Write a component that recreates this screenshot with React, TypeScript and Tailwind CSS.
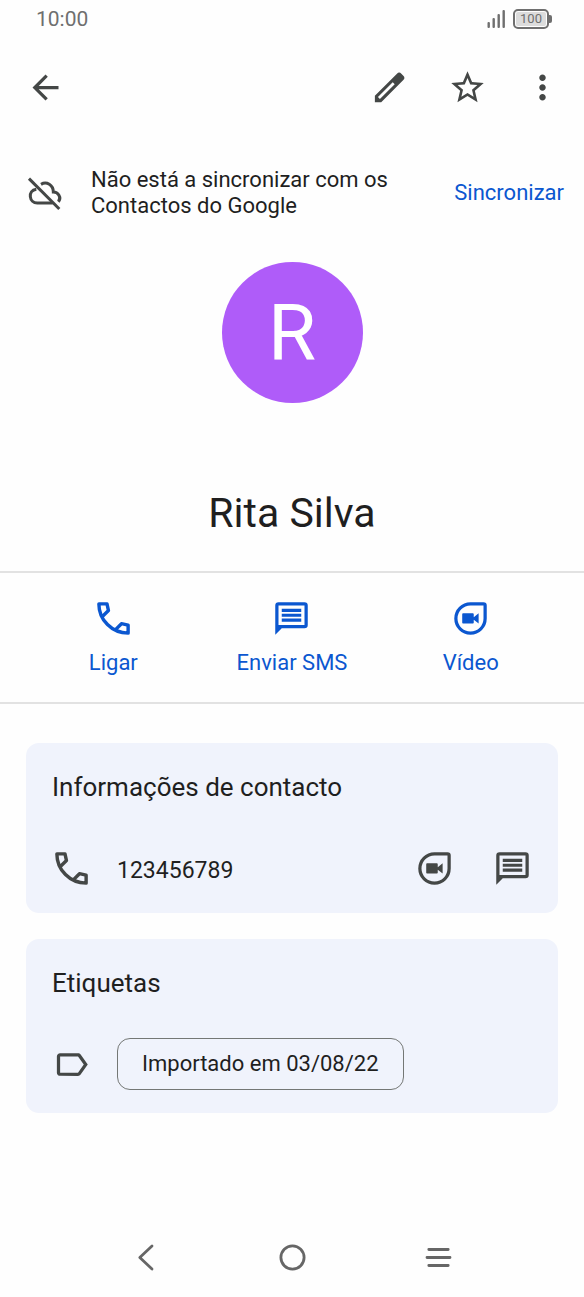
import type { ReactNode } from "react";
import {
  MdArrowBack,
  MdMoreVert,
  MdOutlineLabel,
  MdStarOutline,
} from "react-icons/md";

const ICON = "block h-[39px] w-[39px] shrink-0";

function PencilIcon() {
  return (
    <svg viewBox="0 0 24 24" className={ICON} aria-hidden="true">
      <path
        fill="currentColor"
        fillRule="evenodd"
        d="M20.5 4.7 19.3 3.5a1.9 1.9 0 0 0-2.7 0L3 17.1V21h3.9L20.5 7.4a1.9 1.9 0 0 0 0-2.7ZM6.1 19.1 4.9 17.9 14 8.8l1.2 1.2Z"
      />
    </svg>
  );
}

function CloudOffIcon() {
  return (
    <svg
      viewBox="0 0 117 117"
      className={ICON}
      fill="none"
      stroke="currentColor"
      strokeWidth="9"
      aria-hidden="true"
    >
      <path d="M9 14 100 105" />
      <path d="M45 31C62 21 82 33 82 54C96 54 108 70 97 83" />
      <path d="M31 46C17 48 12 58 13 68C14 79 22 87 34 87H80" />
    </svg>
  );
}

function PhoneIcon() {
  return (
    <svg viewBox="0 0 24 24" className={ICON} aria-hidden="true">
      <path
        fill="none"
        stroke="currentColor"
        strokeWidth="2.1"
        strokeLinejoin="round"
        d="M5 10.9 8.9 7.1 8 3H3C3 12.9 11.1 21 21 21V16.1L16.9 15.2 13.1 19"
      />
    </svg>
  );
}

function ChatIcon() {
  return (
    <svg viewBox="0 0 24 24" className={ICON} aria-hidden="true">
      <path
        fill="currentColor"
        fillRule="evenodd"
        d="M4 2h16a2 2 0 0 1 2 2v12a2 2 0 0 1-2 2H6l-4 4V4a2 2 0 0 1 2-2Zm0 2v12h16V4Z"
      />
      <path stroke="currentColor" strokeWidth="1.9" d="M6 7H18M6 10H18M6 13H18" />
    </svg>
  );
}

function VideoIcon() {
  return (
    <svg viewBox="0 0 24 24" className={ICON} aria-hidden="true">
      <path
        fill="none"
        stroke="currentColor"
        strokeWidth="2"
        d="M12 3h8a1 1 0 0 1 1 1v8a9 9 0 1 1-9-9Z"
      />
      <path
        fill="currentColor"
        d="M7.5 8.8h5.8c.4 0 .7.3.7.7v1.7l3-2.4v6.3l-3-2.4v1.7c0 .4-.3.7-.7.7H7.5a.6.6 0 0 1-.6-.7V9.5c0-.4.3-.7.6-.7Z"
      />
    </svg>
  );
}

function StatusBar() {
  return (
    <div className="flex h-[38px] items-center justify-between pr-8 pl-9 text-[#6f6f6f]">
      <span className="text-[21px] leading-6">10:00</span>
      <div className="flex items-center gap-2">
        <svg viewBox="0 0 18 18" className="h-[18px] w-[18px]" fill="currentColor" aria-hidden="true">
          <rect x="0.5" y="12" width="2.4" height="6" rx="1" />
          <rect x="5.5" y="8" width="2.4" height="10" rx="1" />
          <rect x="10.5" y="4" width="2.4" height="14" rx="1" />
          <rect x="15.5" y="0" width="2.4" height="18" rx="1" />
        </svg>
        <div className="flex items-center">
          <div className="flex h-5 w-9 rounded-[5px] border-2 border-current p-px">
            <span className="flex-1 rounded-xs bg-[#dcdcdc] text-center text-[13px] leading-[14px]">100</span>
          </div>
          <div className="h-2 w-[3px] rounded-r-xs bg-[#6f6f6f]" />
        </div>
      </div>
    </div>
  );
}

function IconButton({ label, children }: { label: string; children: ReactNode }) {
  return (
    <button type="button" aria-label={label} className="text-[#444746]">
      {children}
    </button>
  );
}

function Action({ label, children }: { label: string; children: ReactNode }) {
  return (
    <button type="button" className="flex flex-col items-center gap-3 text-[#0b57d0]">
      {children}
      <span className="text-[22px] leading-[26px]">{label}</span>
    </button>
  );
}

function Card({ title, children }: { title: string; children: ReactNode }) {
  return (
    <section className="rounded-[13px] bg-[#f0f3fc] px-[26px] pt-7">
      <h2 className="text-[26px] leading-8 text-[#1f1f1f]">{title}</h2>
      {children}
    </section>
  );
}

export default function App() {
  return (
    <div className="min-h-screen bg-[#fefefe] font-['Roboto',sans-serif] text-[#1f1f1f]">
      <StatusBar />

      <header className="flex h-[99px] items-center justify-between pr-[22px] pl-[26px]">
        <IconButton label="Voltar">
          <MdArrowBack className={ICON} />
        </IconButton>
        <div className="flex gap-[39px]">
          <IconButton label="Editar">
            <PencilIcon />
          </IconButton>
          <div className="flex gap-9">
            <IconButton label="Favorito">
              <MdStarOutline className={ICON} />
            </IconButton>
            <IconButton label="Mais opções">
              <MdMoreVert className={ICON} />
            </IconButton>
          </div>
        </div>
      </header>

      <main>
        <div className="flex h-[112px] items-center pr-5 pl-[26px]">
          <span className="text-[#444746]">
            <CloudOffIcon />
          </span>
          <p className="ml-[26px] w-[310px] text-[22px] leading-[26px]">
            Não está a sincronizar com os Contactos do Google
          </p>
          <button type="button" className="ml-auto text-[22px] leading-[26px] text-[#0b57d0]">
            Sincronizar
          </button>
        </div>

        <div className="flex flex-col items-center pt-[13px] pb-[34px]">
          <div className="flex h-[141px] w-[141px] items-center justify-center rounded-full bg-[#af5cf9] text-[78px] leading-none text-white">
            R
          </div>
          <h1 className="mt-[86px] text-[41px] leading-[48px]">Rita Silva</h1>
        </div>

        <div className="grid grid-cols-3 border-y-2 border-[#e2e2e2] px-6 py-[26px]">
          <Action label="Ligar">
            <PhoneIcon />
          </Action>
          <Action label="Enviar SMS">
            <ChatIcon />
          </Action>
          <Action label="Vídeo">
            <VideoIcon />
          </Action>
        </div>

        <div className="flex flex-col gap-[26px] px-[26px] pt-[39px]">
          <Card title="Informações de contacto">
            <div className="mt-[46px] flex items-center pb-[25px] text-[#444746]">
              <PhoneIcon />
              <span className="ml-[26px] pt-1 text-[23px] leading-7 text-[#1f1f1f]">123456789</span>
              <div className="ml-auto flex gap-[39px]">
                <IconButton label="Videochamada">
                  <VideoIcon />
                </IconButton>
                <IconButton label="Mensagem">
                  <ChatIcon />
                </IconButton>
              </div>
            </div>
          </Card>
          <Card title="Etiquetas">
            <div className="mt-[39px] flex items-center pb-[23px] text-[#444746]">
              <MdOutlineLabel className={ICON} />
              <button
                type="button"
                className="ml-[26px] h-[52px] rounded-[13px] border border-[#747775] px-6 text-[22px] leading-[26px] text-[#1f1f1f]"
              >
                Importado em 03/08/22
              </button>
            </div>
          </Card>
        </div>
      </main>

      <nav className="mt-[125px] grid grid-cols-3 px-[12.5%] pb-[19px] text-[#666666]">
        <button type="button" aria-label="Retroceder" className="flex justify-center">
          <svg viewBox="0 0 39 39" className={ICON} fill="none" stroke="currentColor" strokeWidth="2.8" strokeLinecap="round" strokeLinejoin="round" aria-hidden="true">
            <path d="M25 8 12.8 19.5 25 31" />
          </svg>
        </button>
        <button type="button" aria-label="Início" className="flex justify-center">
          <svg viewBox="0 0 39 39" className={ICON} fill="none" stroke="currentColor" strokeWidth="2.8" aria-hidden="true">
            <circle cx="19.5" cy="19.5" r="11.6" />
          </svg>
        </button>
        <button type="button" aria-label="Recentes" className="flex justify-center">
          <svg viewBox="0 0 39 39" className={ICON} fill="none" stroke="currentColor" strokeWidth="2.8" strokeLinecap="round" aria-hidden="true">
            <path d="M9.8 11.5H29.2M8 19.5H31M9.8 27.5H29.2" />
          </svg>
        </button>
      </nav>
    </div>
  );
}
